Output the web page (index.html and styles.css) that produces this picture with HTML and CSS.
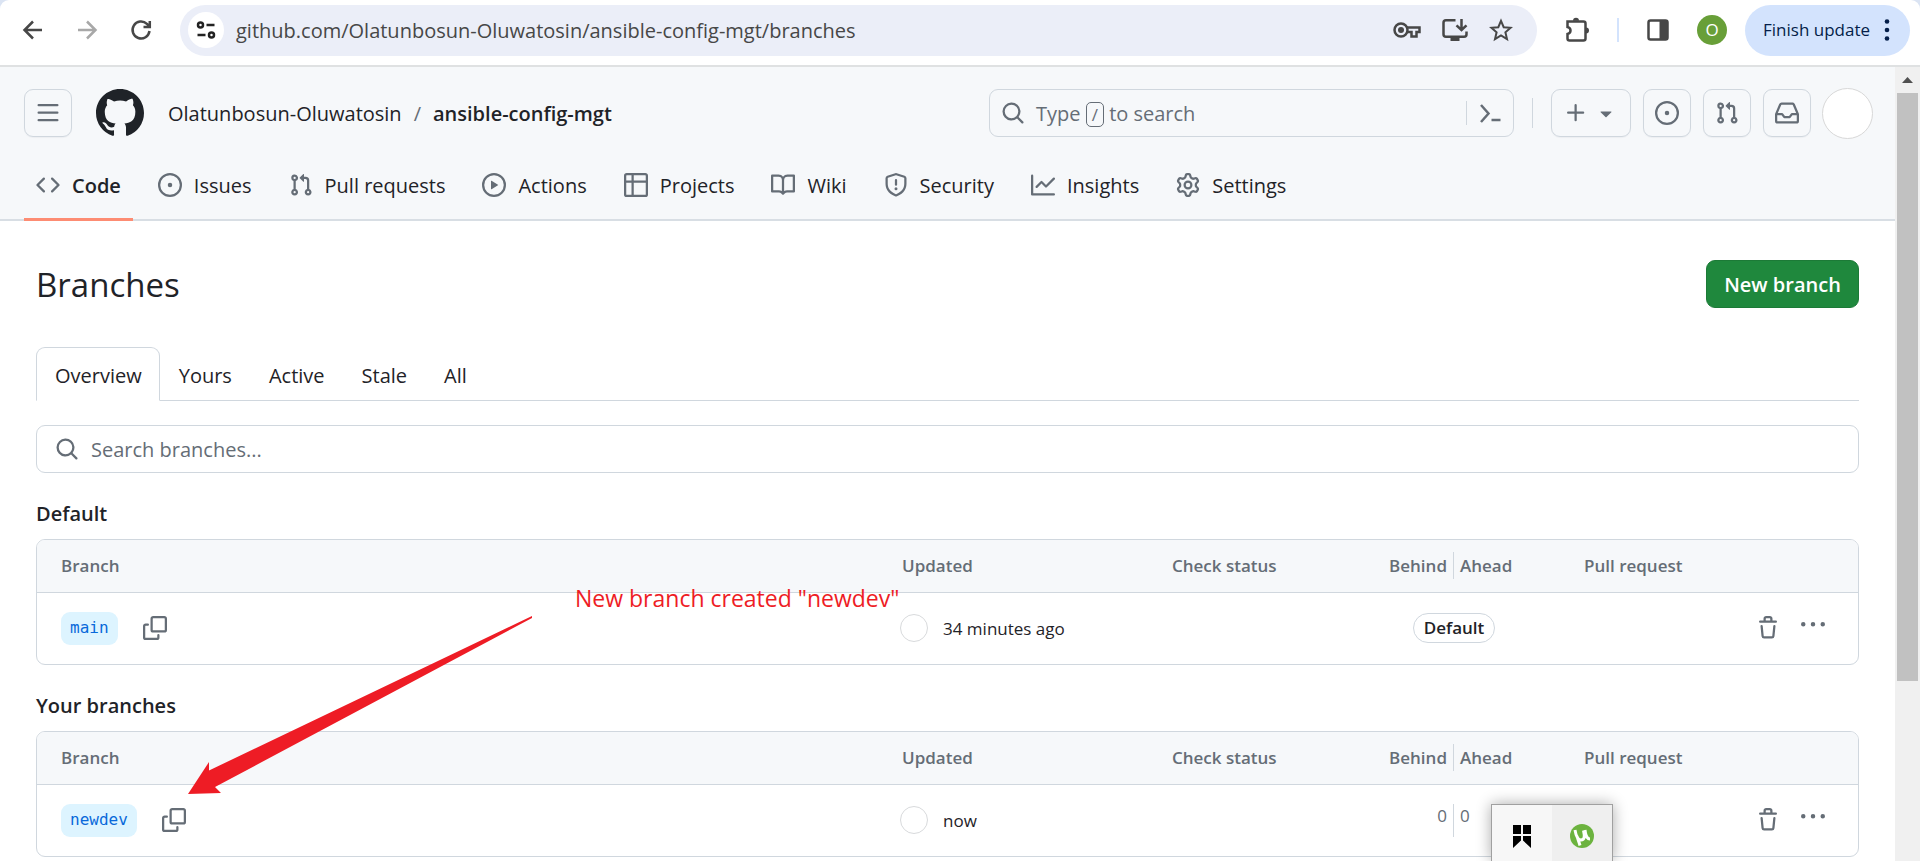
FILE: index.html
```html
<!DOCTYPE html>
<html lang="en">
<head>
<meta charset="utf-8">
<title>Branches · Olatunbosun-Oluwatosin/ansible-config-mgt</title>
<link rel="stylesheet" href="styles.css">
</head>
<body>
<svg class="sprite" aria-hidden="true">
  <symbol id="i-issue" viewBox="0 0 16 16"><path d="M8 9.5a1.5 1.5 0 1 0 0-3 1.5 1.5 0 0 0 0 3Z"/><path d="M8 0a8 8 0 1 1 0 16A8 8 0 0 1 8 0ZM1.5 8a6.5 6.5 0 1 0 13 0 6.5 6.5 0 0 0-13 0Z"/></symbol>
  <symbol id="i-pr" viewBox="0 0 16 16"><path d="M1.5 3.25a2.25 2.25 0 1 1 3 2.122v5.256a2.251 2.251 0 1 1-1.5 0V5.372A2.25 2.25 0 0 1 1.5 3.25Zm5.677-.177L9.573.677A.25.25 0 0 1 10 .854V2.5h1A2.5 2.5 0 0 1 13.500 5v5.628a2.251 2.251 0 1 1-1.5 0V5a1 1 0 0 0-1-1h-1v1.646a.25.25 0 0 1-.427.177L7.177 3.427a.25.25 0 0 1 0-.354ZM3.750 2.500a.75.75 0 1 0 0 1.500.75.75 0 0 0 0-1.500Zm0 9.500a.75.75 0 1 0 0 1.500.75.75 0 0 0 0-1.500Zm8.250.750a.75.75 0 1 0 1.500 0 .75.75 0 0 0-1.500 0Z"/></symbol>
  <symbol id="i-search" viewBox="0 0 16 16"><path d="M10.680 11.740a6 6 0 0 1-7.922-8.982 6 6 0 0 1 8.982 7.922l3.040 3.040a.749.749 0 0 1-.326 1.275.749.749 0 0 1-.734-.215ZM11.500 7a4.499 4.499 0 1 0-8.997 0A4.499 4.499 0 0 0 11.500 7Z"/></symbol>
  <symbol id="i-copy" viewBox="0 0 16 16"><path d="M0 6.750C0 5.784.784 5 1.750 5h1.500a.75.75 0 0 1 0 1.500h-1.500a.25.25 0 0 0-.25.25v7.500c0 .138.112.25.25.25h7.500a.25.25 0 0 0 .25-.25v-1.500a.75.75 0 0 1 1.500 0v1.500A1.750 1.750 0 0 1 9.250 16h-7.500A1.750 1.750 0 0 1 0 14.250Z"/><path d="M5 1.750C5 .784 5.784 0 6.750 0h7.500C15.216 0 16 .784 16 1.750v7.500A1.750 1.750 0 0 1 14.250 11h-7.500A1.750 1.750 0 0 1 5 9.250Zm1.750-.25a.25.25 0 0 0-.25.25v7.500c0 .138.112.25.25.25h7.500a.25.25 0 0 0 .25-.25v-7.500a.25.25 0 0 0-.25-.25Z"/></symbol>
  <symbol id="i-trash" viewBox="0 0 16 16"><path d="M11 1.750V3h2.250a.75.75 0 0 1 0 1.500H2.750a.75.75 0 0 1 0-1.500H5V1.750C5 .784 5.784 0 6.750 0h2.500C10.216 0 11 .784 11 1.750ZM4.496 6.675l.66 6.600a.25.25 0 0 0 .249.225h5.190a.25.25 0 0 0 .249-.225l.66-6.600a.75.75 0 0 1 1.492.149l-.66 6.600A1.748 1.748 0 0 1 10.595 15h-5.190a1.750 1.750 0 0 1-1.741-1.575l-.66-6.600a.75.75 0 1 1 1.492-.15ZM6.500 1.750V3h3V1.750a.25.25 0 0 0-.25-.25h-2.500a.25.25 0 0 0-.25.25Z"/></symbol>
  <symbol id="i-dots" viewBox="0 0 16 16"><path d="M8 9a1.500 1.500 0 1 0 0-3 1.500 1.500 0 0 0 0 3ZM1.500 9a1.500 1.500 0 1 0 0-3 1.500 1.500 0 0 0 0 3Zm13 0a1.500 1.500 0 1 0 0-3 1.500 1.500 0 0 0 0 3Z"/></symbol>
</svg>

<div class="browser">
  <div class="toolbar">
    <div class="nav-buttons">
      <button class="tool" aria-label="Back"><svg class="icon line" viewBox="0 0 24 24"><path d="M21 12H4M12 3.500 3.500 12l8.500 8.500"/></svg></button>
      <button class="tool tool-off" aria-label="Forward"><svg class="icon line" viewBox="0 0 24 24"><path d="M3 12h17M12 3.500l8.500 8.500-8.500 8.500"/></svg></button>
      <button class="tool" aria-label="Reload"><svg class="icon line" viewBox="0 0 24 24"><path d="M20.500 13a8.500 8.500 0 1 1-2.600-7.200L20.500 8.400M20.800 3v6h-6.300"/></svg></button>
    </div>
    <div class="address">
      <button class="site-info" aria-label="Site information"><svg class="icon line" viewBox="0 0 24 24"><circle cx="6.500" cy="7" r="2.500"/><path d="M12.500 7h8M3.500 17h8"/><circle cx="17.500" cy="17" r="2.500"/></svg></button>
      <input class="url" aria-label="Address" value="github.com/Olatunbosun-Oluwatosin/ansible-config-mgt/branches">
      <button class="tool" aria-label="Passwords"><svg class="key-icon line" viewBox="0 0 28 24"><circle cx="8" cy="12" r="6.500"/><circle class="fill" cx="8" cy="12" r="3"/><path d="M14 9.500h12.500V14h-3v4.500h-5V14H14"/></svg></button>
      <button class="tool" aria-label="Install"><svg class="install-icon" viewBox="0 0 26 24"><path class="stroke" d="M13.500 2.300H4A2.500 2.500 0 0 0 1.500 4.800v11.500A2.500 2.500 0 0 0 4 18.800h18a2.500 2.500 0 0 0 2.500-2.500V13.500M19.500 1v10.500M14.500 7.300l5 4.700 5-4.700"/><path d="M8.500 18.500h9V23h-9z"/></svg></button>
      <button class="tool" aria-label="Bookmark"><svg class="icon line star" viewBox="0 0 24 24"><path d="M12 2.800 14.700 9.200l6.900.6-5.200 4.500 1.600 6.800L12 17.500l-6 3.600 1.600-6.800L2.400 9.800l6.900-.6Z"/></svg></button>
    </div>
    <button class="tool extensions" aria-label="Extensions"><svg class="ext-icon" viewBox="0 0 26 26"><path class="stroke" d="M3.500 4.500h16a2 2 0 0 1 2 2v15a2 2 0 0 1-2 2h-14a2 2 0 0 1-2-2v-4.500c4-1 4-6 0-7V4.500Z"/><path d="M9 3.800a3 3 0 0 1 6 0ZM22 10.500a3 3 0 0 1 0 6Z"/></svg></button>
    <span class="tool-divider"></span>
    <button class="tool side" aria-label="Side panel"><svg class="icon" viewBox="0 0 24 24"><rect class="stroke" x="2.500" y="2.500" width="19" height="19" rx="2"/><path d="M13.500 2h8v20h-8z"/></svg></button>
    <button class="profile" aria-label="Profile">O</button>
    <button class="update">Finish update <svg class="update-dots" viewBox="0 0 6 24"><circle cx="3" cy="3.500" r="2.300"/><circle cx="3" cy="12" r="2.300"/><circle cx="3" cy="20.500" r="2.300"/></svg></button>
  </div>

  <div class="viewport">
    <div class="page">
      <header class="header">
        <div class="header-top">
          <button class="box-button" aria-label="Open menu"><svg class="icon" viewBox="0 0 16 16"><path d="M1 2.750A.75.75 0 0 1 1.750 2h12.500a.75.75 0 0 1 0 1.500H1.750A.75.75 0 0 1 1 2.750Zm0 5A.75.75 0 0 1 1.750 7h12.500a.75.75 0 0 1 0 1.500H1.750A.75.75 0 0 1 1 7.750ZM1.750 12h12.500a.75.75 0 0 1 0 1.500H1.750a.75.75 0 0 1 0-1.500Z"/></svg></button>
          <a class="logo" href="#" aria-label="Home"><svg viewBox="0 0 16 16"><path d="M8 0c4.420 0 8 3.580 8 8a8.013 8.013 0 0 1-5.450 7.590c-.4.080-.55-.17-.55-.38 0-.27.010-1.130.010-2.200 0-.75-.25-1.230-.54-1.480 1.780-.2 3.650-.88 3.650-3.950 0-.88-.31-1.590-.82-2.150.080-.2.360-1.020-.080-2.120 0 0-.67-.22-2.200.82-.64-.18-1.320-.27-2-.27-.68 0-1.360.090-2 .27-1.530-1.030-2.200-.82-2.200-.82-.44 1.100-.16 1.920-.080 2.120-.51.560-.82 1.280-.82 2.150 0 3.060 1.860 3.750 3.640 3.950-.23.200-.44.550-.51 1.070-.46.210-1.610.55-2.330-.66-.15-.24-.6-.83-1.230-.82-.67.010-.27.380.010.53.340.190.730.900.820 1.130.16.450.680 1.310 2.690.940 0 .67.010 1.300.010 1.490 0 .21-.15.450-.55.380A7.995 7.995 0 0 1 0 8c0-4.420 3.580-8 8-8Z"/></svg></a>
          <nav class="crumbs" aria-label="Repository"><a href="#">Olatunbosun-Oluwatosin</a><span class="slash">/</span><a class="repo" href="#">ansible-config-mgt</a></nav>
          <div class="search">
            <button class="search-open"><svg class="icon" aria-hidden="true"><use href="#i-search"/></svg><span class="search-text">Type <kbd>/</kbd> to search</span></button>
            <button class="terminal" aria-label="Command palette"><svg class="icon line" viewBox="0 0 24 24"><path d="M3 4l7.500 8.500L3 21M13.500 19h9"/></svg></button>
          </div>
          <span class="divider"></span>
          <div class="actions">
            <button class="box-button wide" aria-label="Create new"><svg class="icon" viewBox="0 0 16 16"><path d="M7.750 2a.75.75 0 0 1 .75.75V7h4.250a.75.75 0 0 1 0 1.500H8.500v4.250a.75.75 0 0 1-1.500 0V8.500H2.750a.75.75 0 0 1 0-1.500H7V2.750A.75.75 0 0 1 7.750 2Z"/></svg><svg class="icon" viewBox="0 0 16 16"><path d="m4.427 7.427 3.396 3.396a.25.25 0 0 0 .354 0l3.396-3.396A.25.25 0 0 0 11.396 7H4.604a.25.25 0 0 0-.177.427Z"/></svg></button>
            <button class="box-button" aria-label="Issues"><svg class="icon"><use href="#i-issue"/></svg></button>
            <button class="box-button" aria-label="Pull requests"><svg class="icon"><use href="#i-pr"/></svg></button>
            <button class="box-button" aria-label="Inbox"><svg class="icon" viewBox="0 0 16 16"><path d="M2.800 2.060A1.750 1.750 0 0 1 4.410 1h7.180c.7 0 1.333.417 1.610 1.060l2.740 6.395c.04.093.06.194.06.295v4.500A1.750 1.750 0 0 1 14.250 15H1.750A1.750 1.750 0 0 1 0 13.250v-4.500c0-.101.020-.202.060-.295Zm1.610.440a.25.25 0 0 0-.23.152L1.887 8H4.750a.75.75 0 0 1 .6.300L6.625 10h2.750l1.275-1.700a.75.75 0 0 1 .6-.3h2.863L11.820 2.652a.25.25 0 0 0-.23-.152Zm10.090 7h-2.875l-1.275 1.700a.75.75 0 0 1-.6.300h-3.500a.75.75 0 0 1-.6-.3L4.375 9.500H1.500v3.750c0 .138.112.25.25.25h12.500a.25.25 0 0 0 .25-.25Z"/></svg></button>
          </div>
          <button class="avatar" aria-label="Account"></button>
        </div>
        <nav class="tabs" aria-label="Sections">
          <a class="tab current" href="#"><svg class="icon" viewBox="0 0 16 16"><path d="m11.280 3.220 4.250 4.250a.75.75 0 0 1 0 1.060l-4.250 4.250a.749.749 0 0 1-1.275-.326.749.749 0 0 1 .215-.734L13.940 8l-3.720-3.720a.749.749 0 0 1 .326-1.275.749.749 0 0 1 .734.215Zm-6.560 0a.751.751 0 0 1 1.042.018.751.751 0 0 1 .018 1.042L2.060 8l3.720 3.720a.749.749 0 0 1-.326 1.275.749.749 0 0 1-.734-.215L.47 8.530a.75.75 0 0 1 0-1.060Z"/></svg><span>Code</span></a>
          <a class="tab" href="#"><svg class="icon"><use href="#i-issue"/></svg><span>Issues</span></a>
          <a class="tab" href="#"><svg class="icon"><use href="#i-pr"/></svg><span>Pull requests</span></a>
          <a class="tab" href="#"><svg class="icon" viewBox="0 0 16 16"><path d="M8 0a8 8 0 1 1 0 16A8 8 0 0 1 8 0ZM1.500 8a6.500 6.500 0 1 0 13 0 6.500 6.500 0 0 0-13 0Zm4.879-2.773 4.264 2.559a.25.25 0 0 1 0 .428l-4.264 2.559A.25.25 0 0 1 6 10.559V5.442a.25.25 0 0 1 .379-.215Z"/></svg><span>Actions</span></a>
          <a class="tab" href="#"><svg class="icon" viewBox="0 0 16 16"><path d="M0 1.750C0 .784.784 0 1.750 0h12.500C15.216 0 16 .784 16 1.750v12.500A1.750 1.750 0 0 1 14.250 16H1.750A1.750 1.750 0 0 1 0 14.250ZM6.500 6.500v8h7.750a.25.25 0 0 0 .25-.25V6.500Zm8-1.500V1.750a.25.25 0 0 0-.25-.25H6.500V5Zm-13 1.500v7.750c0 .138.112.25.25.25H5v-8ZM5 5V1.500H1.750a.25.25 0 0 0-.25.25V5Z"/></svg><span>Projects</span></a>
          <a class="tab" href="#"><svg class="icon" viewBox="0 0 16 16"><path d="M0 1.750A.75.75 0 0 1 .75 1h4.253c1.227 0 2.317.59 3 1.501A3.743 3.743 0 0 1 11.006 1h4.245a.75.75 0 0 1 .75.75v10.500a.75.75 0 0 1-.75.75h-4.507a2.250 2.250 0 0 0-1.591.659l-.622.621a.75.75 0 0 1-1.060 0l-.622-.621A2.250 2.250 0 0 0 5.258 13H.75a.75.75 0 0 1-.75-.75Zm7.251 10.324.004-5.073-.002-2.253A2.250 2.250 0 0 0 5.003 2.500H1.500v9h3.757a3.750 3.750 0 0 1 1.994.574ZM8.755 4.750l-.004 7.322a3.752 3.752 0 0 1 1.992-.572H14.500v-9h-3.495a2.250 2.250 0 0 0-2.250 2.250Z"/></svg><span>Wiki</span></a>
          <a class="tab" href="#"><svg class="icon" viewBox="0 0 16 16"><path d="M7.467.133a1.748 1.748 0 0 1 1.066 0l5.250 1.680A1.750 1.750 0 0 1 15 3.480V7c0 1.566-.32 3.182-1.303 4.682-.983 1.498-2.585 2.813-5.032 3.855a1.697 1.697 0 0 1-1.330 0c-2.447-1.042-4.049-2.357-5.032-3.855C1.320 10.182 1 8.566 1 7V3.480a1.750 1.750 0 0 1 1.217-1.667Zm.61 1.429a.25.25 0 0 0-.153 0l-5.250 1.680a.25.25 0 0 0-.174.238V7c0 1.358.275 2.666 1.057 3.860.784 1.194 2.121 2.340 4.366 3.297a.196.196 0 0 0 .154 0c2.245-.956 3.582-2.104 4.366-3.298C13.225 9.666 13.500 8.360 13.500 7V3.480a.251.251 0 0 0-.174-.237l-5.250-1.680ZM8.750 4.750v3a.75.75 0 0 1-1.500 0v-3a.75.75 0 0 1 1.500 0ZM9 10.500a1 1 0 1 1-2 0 1 1 0 0 1 2 0Z"/></svg><span>Security</span></a>
          <a class="tab" href="#"><svg class="icon" viewBox="0 0 16 16"><path d="M1.500 1.750V13.500h13.750a.75.75 0 0 1 0 1.500H.75a.75.75 0 0 1-.75-.75V1.750a.75.75 0 0 1 1.500 0Zm14.280 2.530-5.250 5.250a.75.75 0 0 1-1.060 0L7 7.060 4.280 9.780a.751.751 0 0 1-1.042-.018.751.751 0 0 1-.018-1.042l3.250-3.250a.75.75 0 0 1 1.060 0L10 7.940l4.720-4.720a.751.751 0 0 1 1.042.018.751.751 0 0 1 .018 1.042Z"/></svg><span>Insights</span></a>
          <a class="tab" href="#"><svg class="icon" viewBox="0 0 16 16"><path d="M8 0a8.200 8.200 0 0 1 .701.031C9.444.095 9.990.645 10.160 1.290l.288 1.107c.018.066.079.158.212.224.231.114.454.243.668.386.123.082.233.090.299.071l1.103-.303c.644-.176 1.392.021 1.820.63.270.385.506.792.704 1.218.315.675.111 1.422-.364 1.891l-.814.806c-.049.048-.098.147-.088.294.016.257.016.515 0 .772-.010.147.038.246.088.294l.814.806c.475.469.679 1.216.364 1.891a7.977 7.977 0 0 1-.704 1.217c-.428.610-1.176.807-1.820.630l-1.102-.302c-.067-.019-.177-.011-.300.071a5.909 5.909 0 0 1-.668.386c-.133.066-.194.158-.211.224l-.290 1.106c-.168.646-.715 1.196-1.458 1.260a8.006 8.006 0 0 1-1.402 0c-.743-.064-1.289-.614-1.458-1.260l-.289-1.106c-.018-.066-.079-.158-.212-.224a5.738 5.738 0 0 1-.668-.386c-.123-.082-.233-.090-.299-.071l-1.103.303c-.644.176-1.392-.021-1.820-.63a8.120 8.120 0 0 1-.704-1.218c-.315-.675-.111-1.422.363-1.891l.815-.806c.050-.048.098-.147.088-.294a6.214 6.214 0 0 1 0-.772c.010-.147-.038-.246-.088-.294l-.815-.806C.635 6.045.431 5.298.746 4.623a7.920 7.920 0 0 1 .704-1.217c.428-.610 1.176-.807 1.820-.630l1.102.302c.067.019.177.011.300-.071.214-.143.437-.272.668-.386.133-.066.194-.158.211-.224l.290-1.106C6.009.645 6.556.095 7.299.031 7.530.010 7.764 0 8 0Zm-.571 1.525c-.036.003-.108.036-.137.146l-.289 1.105c-.147.561-.549.967-.998 1.189-.173.086-.340.183-.500.290-.417.278-.970.423-1.529.270l-1.103-.303c-.109-.030-.175.016-.195.045-.220.312-.412.644-.573.990-.014.031-.021.110.059.190l.815.806c.411.406.562.957.530 1.456a4.709 4.709 0 0 0 0 .582c.032.499-.119 1.050-.530 1.456l-.815.806c-.081.080-.073.159-.059.190.162.346.353.677.573.989.020.030.085.076.195.046l1.102-.303c.560-.153 1.113-.008 1.530.270.161.107.328.204.501.290.447.222.850.629.997 1.189l.289 1.105c.029.109.101.143.137.146a6.600 6.600 0 0 0 1.142 0c.036-.003.108-.036.137-.146l.289-1.105c.147-.561.549-.967.998-1.189.173-.086.340-.183.500-.290.417-.278.970-.423 1.529-.270l1.103.303c.109.029.175-.016.195-.045.220-.313.411-.644.573-.990.014-.031.021-.110-.059-.190l-.815-.806c-.411-.406-.562-.957-.530-1.456a4.709 4.709 0 0 0 0-.582c-.032-.499.119-1.050.530-1.456l.815-.806c.081-.080.073-.159.059-.190a6.464 6.464 0 0 0-.573-.989c-.020-.030-.085-.076-.195-.046l-1.102.303c-.560.153-1.113.008-1.530-.270a4.440 4.440 0 0 0-.501-.290c-.447-.222-.850-.629-.997-1.189l-.289-1.105c-.029-.110-.101-.143-.137-.146a6.600 6.600 0 0 0-1.142 0ZM11 8a3 3 0 1 1-6 0 3 3 0 0 1 6 0ZM9.500 8a1.500 1.500 0 1 0-3.001.001A1.500 1.500 0 0 0 9.500 8Z"/></svg><span>Settings</span></a>
        </nav>
      </header>

      <main class="main">
        <div class="title-row"><h1>Branches</h1><button class="primary">New branch</button></div>
        <nav class="subtabs" aria-label="Branch filters">
          <a class="subtab selected" href="#">Overview</a><a class="subtab" href="#">Yours</a><a class="subtab" href="#">Active</a><a class="subtab" href="#">Stale</a><a class="subtab" href="#">All</a>
        </nav>
        <label class="filter"><svg class="icon" aria-hidden="true"><use href="#i-search"/></svg><input aria-label="Search branches" placeholder="Search branches..."></label>

        <h2>Default</h2>
        <div class="panel">
          <table>
            <colgroup><col><col class="c-updated"><col class="c-check"><col class="c-diff"><col class="c-pr"><col class="c-act"></colgroup>
            <thead><tr><th>Branch</th><th>Updated</th><th>Check status</th><th><div class="diff"><span>Behind</span><span>Ahead</span></div></th><th class="pr">Pull request</th><th aria-label="Actions"></th></tr></thead>
            <tbody><tr>
              <td><div class="branch"><a class="branch-name" href="#">main</a><button class="plain" aria-label="Copy branch name"><svg class="icon"><use href="#i-copy"/></svg></button></div></td>
              <td><div class="updated"><span class="dot"></span>34 minutes ago</div></td>
              <td></td>
              <td class="center"><span class="badge">Default</span></td>
              <td></td>
              <td><div class="row-actions"><button class="plain" aria-label="Delete branch"><svg class="icon"><use href="#i-trash"/></svg></button><button class="plain more" aria-label="More"><svg class="icon"><use href="#i-dots"/></svg></button></div></td>
            </tr></tbody>
          </table>
        </div>

        <h2>Your branches</h2>
        <div class="panel">
          <table>
            <colgroup><col><col class="c-updated"><col class="c-check"><col class="c-diff"><col class="c-pr"><col class="c-act"></colgroup>
            <thead><tr><th>Branch</th><th>Updated</th><th>Check status</th><th><div class="diff"><span>Behind</span><span>Ahead</span></div></th><th class="pr">Pull request</th><th aria-label="Actions"></th></tr></thead>
            <tbody><tr>
              <td><div class="branch"><a class="branch-name" href="#">newdev</a><button class="plain" aria-label="Copy branch name"><svg class="icon"><use href="#i-copy"/></svg></button></div></td>
              <td><div class="updated"><span class="dot"></span>now</div></td>
              <td></td>
              <td><div class="diff counts"><span>0</span><span>0</span></div></td>
              <td></td>
              <td><div class="row-actions"><button class="plain" aria-label="Delete branch"><svg class="icon"><use href="#i-trash"/></svg></button><button class="plain more" aria-label="More"><svg class="icon"><use href="#i-dots"/></svg></button></div></td>
            </tr></tbody>
          </table>
        </div>
      </main>
    </div>
    <div class="scrollbar" aria-hidden="true">
      <svg class="scroll-arrow" viewBox="0 0 25 26"><path d="M7 16h11l-5.500-6z"/></svg>
      <div class="scroll-thumb"></div>
    </div>
  </div>
</div>

<svg class="arrow" viewBox="0 0 348 180" aria-hidden="true"><path d="M344 2 21 156.500V148L0 180l33-1-6-6L344 4Z"/></svg>
<p class="note">New branch created "newdev"</p>
<div class="tray">
  <button aria-label="Bookmarks"><svg class="icon" viewBox="0 0 24 24"><path d="M3 1h8v9H3zM13 1h8v9h-8zM3 12h8v4.500L3 24zM13 12h8v12l-8-7.500z"/></svg></button>
  <button aria-label="Torrent client"><svg class="icon" viewBox="0 0 24 24"><circle class="disc" cx="12" cy="12" r="12"/><path class="mu" d="M5 6c1 6 3 10 6 10 3.500 0 4-3 2.500-9.500M15 6c.5 5 2 9 5 9M7 12c1 4 2 6 3 9.500"/></svg></button>
</div>
</body>
</html>
```
FILE: styles.css
```css
* { box-sizing: border-box; }
body { margin: 0; height: 100vh; overflow: hidden; position: relative; background: #fff; color: #1f2328; font-family: "Open Sans", "Noto Sans", sans-serif; font-size: 20px; line-height: 30px; }
button { font: inherit; color: inherit; border: 0; background: none; padding: 0; }
input { font: inherit; color: inherit; border: 0; background: none; padding: 0; outline: 0; min-width: 0; }
a { color: inherit; text-decoration: none; }
svg { display: block; fill: currentColor; flex: none; }
.sprite { display: none; }
.icon { width: 24px; height: 24px; }
.line, .stroke { fill: none; stroke: currentColor; stroke-width: 2.5; }

.browser { display: flex; flex-direction: column; height: 100%; background: #dbe4f3; }
.toolbar { display: flex; align-items: center; height: 67px; padding: 0 10px 5px 21px; border-bottom: 2px solid #dfe1e2; border-radius: 9px 9px 0 0; background: #fff; flex: none; color: #474747; }
.nav-buttons { display: flex; gap: 30px; margin-right: 27px; }
.tool-off { color: #a8a8a8; }
.address { display: flex; align-items: center; flex: 1; height: 51px; padding: 0 24px 0 8px; border-radius: 26px; background: #ebeef8; margin-right: 27px; }
.site-info { display: grid; place-items: center; width: 36px; height: 36px; border-radius: 50%; background: #fff; color: #222; margin-right: 12px; }
.url { flex: 1; padding-top: 2px; }
.address .tool { margin-left: 21px; }
.key-icon { width: 28px; height: 24px; }
.key-icon .fill { fill: currentColor; stroke: none; }
.install-icon { width: 26px; height: 24px; }
.star { stroke-width: 2; }
.ext-icon { width: 26px; height: 26px; }
.tool-divider { width: 2px; height: 24px; background: #d3e3fd; margin: 0 27px; }
.profile { width: 30px; height: 30px; border-radius: 50%; background: #689f38; color: #fff; font-size: 17px; margin: 0 18px 0 27px; }
.update { display: flex; align-items: center; justify-content: space-between; width: 165px; height: 51px; padding: 0 20px 0 18px; border-radius: 26px; background: #d3e3fd; color: #041e49; font-size: 17px; }
.update-dots { width: 6px; height: 24px; }

.viewport { display: flex; flex: 1; min-height: 0; background: #fff; }
.page { flex: 1; overflow: hidden; }
.scrollbar { display: flex; flex-direction: column; align-items: center; width: 25px; background: #f0f0f0; }
.scroll-arrow { width: 25px; height: 26px; fill: #505050; }
.scroll-thumb { width: 21px; height: 74%; background: #c1c1c1; }

.header { background: #f6f8fa; border-bottom: 2px solid #d8dee4; }
.header-top { display: flex; align-items: center; padding: 20px 22px 0 24px; height: 72px; }
.box-button { display: flex; align-items: center; justify-content: center; width: 48px; height: 48px; border: 1px solid #d0d7de; border-radius: 9px; color: #656d76; box-shadow: 0 1px 1px #1f23280a; }
.wide { width: 80px; gap: 6px; }
.logo { margin: 0 24px; color: #1f2328; }
.logo svg { width: 48px; height: 48px; }
.crumbs { display: flex; gap: 12px; flex: 1; padding-top: 2px; }
.slash { color: #656d76; }
.repo { font-weight: 600; }
.search { display: flex; align-items: center; width: 525px; height: 48px; padding: 0 11px; border: 1px solid #d0d7de; border-radius: 9px; color: #656d76; }
.search-open { display: flex; align-items: center; gap: 11px; flex: 1; text-align: left; }
.search-text { padding-top: 2px; }
kbd { font: inherit; font-size: 17px; border: 1px solid #656d76; border-radius: 5px; padding: 0 5px; }
.terminal { border-left: 1px solid #d0d7de; padding-left: 11px; }
.divider { width: 1px; height: 30px; background: #d0d7de; margin: 0 18px; }
.actions { display: flex; gap: 12px; }
.avatar { width: 51px; height: 51px; border: 1px solid #d8d8d8; border-radius: 50%; background: #fff; margin-left: 11px; }

.tabs { display: flex; gap: 13px; padding: 12px 24px 0; }
.tab { display: flex; align-items: center; gap: 12px; height: 70px; padding: 0 12px; border-bottom: 3px solid transparent; margin-bottom: -2px; }
.tab span { padding-top: 2px; }
.tab .icon { color: #656d76; }
.current { font-weight: 600; border-color: #fd8c73; }

.main { padding: 39px 36px 0; }
.title-row { display: flex; align-items: center; justify-content: space-between; height: 48px; }
h1 { margin: 0; padding-top: 2px; font-size: 33px; line-height: 48px; font-weight: 400; }
.primary { width: 153px; height: 48px; padding-top: 2px; border-radius: 9px; background: #1f883d; border: 1px solid #1c7a37; color: #fff; font-weight: 600; }
.subtabs { display: flex; margin-top: 39px; border-bottom: 1px solid #d0d7de; }
.subtab { height: 53px; padding: 13px 17px 0 18px; border: 1px solid transparent; }
.selected { border-color: #d0d7de #d0d7de transparent; border-radius: 9px 9px 0 0; background: #fff; margin-bottom: -1px; height: 54px; }
.filter { display: flex; align-items: center; gap: 12px; height: 48px; margin-top: 24px; padding: 0 18px; border: 1px solid #d0d7de; border-radius: 9px; color: #656d76; }
.filter input { flex: 1; padding-top: 2px; }
.filter input::placeholder { color: #656d76; opacity: 1; }
h2 { margin: 26px 0 10px; font-size: 20px; line-height: 30px; font-weight: 600; }
.panel { border: 1px solid #d0d7de; border-radius: 9px; overflow: hidden; }
table { width: 100%; border-collapse: collapse; table-layout: fixed; font-size: 17px; line-height: 27px; }
th, td { padding: 0; text-align: left; }
th { height: 52px; background: #f6f8fa; border-bottom: 1px solid #d0d7de; color: #656d76; font-weight: 600; }
td { height: 72px; }
th:first-child, td:first-child { padding-left: 24px; }
.c-updated { width: 270px; }
.c-check { width: 177px; }
.c-diff { width: 210px; }
.c-pr { width: 197px; }
.c-act { width: 102px; }
.pr { padding-left: 25px; }
.diff { display: grid; grid-template-columns: 1fr 1fr; }
.diff span { padding: 0 6px; }
.diff span:first-child { text-align: right; border-right: 1px solid #d0d7de; }
.counts { color: #656d76; line-height: 24px; }
.counts span { padding-bottom: 9px; }
.center { text-align: center; }
.branch { display: flex; align-items: center; gap: 25px; }
.branch-name { height: 33px; padding: 0 9px; border-radius: 9px; background: #ddf4ff; color: #0969da; font-family: "DejaVu Sans Mono", monospace; font-size: 16px; line-height: 32px; }
.plain { color: #656d76; }
.more { padding-bottom: 6px; }
.updated { display: flex; align-items: center; gap: 15px; margin-left: -2px; }
.dot { width: 28px; height: 28px; border: 1px solid #d8dadc; border-radius: 50%; }
.badge { display: inline-block; padding: 0 10px; border: 1px solid #d0d7de; border-radius: 15px; font-weight: 600; line-height: 28px; }
.row-actions { display: flex; align-items: center; gap: 21px; }

.arrow { position: absolute; left: 188px; top: 614px; width: 348px; height: 180px; fill: #ee1c25; }
.note { position: absolute; left: 575px; top: 582px; margin: 0; color: #ee1c25; font-size: 23px; line-height: 32px; }
.tray { position: absolute; left: 1491px; bottom: 0; display: grid; grid-template-columns: 60px 60px; height: 57px; border: 1px solid #a0a0a0; border-bottom: 0; background: #f7f7f7; box-shadow: 0 0 14px #00000055; color: #000; }
.tray button { display: grid; place-items: center; padding-top: 6px; }
.tray button + button { background: #efefef; }
.disc { fill: #6cb33f; }
.mu { fill: none; stroke: #fff; stroke-width: 3; }
```
